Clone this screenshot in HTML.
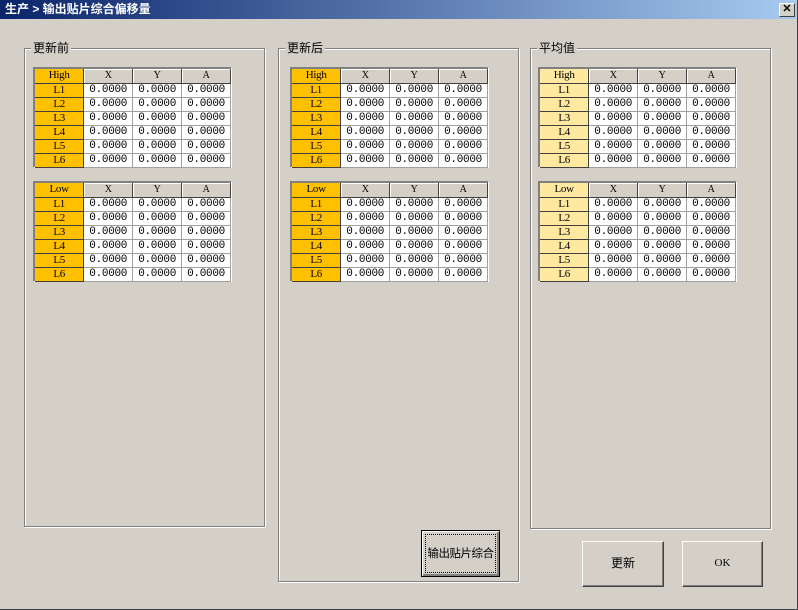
<!DOCTYPE html>
<html><head><meta charset="utf-8"><style>
*{margin:0;padding:0;box-sizing:border-box}
body{width:798px;height:610px;background:#d4d0c8;position:relative;overflow:hidden;font-family:"Liberation Sans","Noto Sans CJK SC",sans-serif;font-size:11px;color:#000}
.win{position:absolute;left:0;top:0;width:798px;height:610px;border-right:1px solid #404040;border-bottom:1px solid #404040}
.title{position:absolute;left:0;top:0;width:797px;height:19px;background:linear-gradient(to right,#0a246a,#a6caf0);color:#fff;font-weight:bold;font-size:12px;line-height:19px;padding-left:5px;font-family:"Liberation Sans","Noto Sans CJK SC",sans-serif}
.close{position:absolute;left:779px;top:3px;width:16px;height:14px;background:#d4d0c8;border:1px solid;border-color:#fff #404040 #404040 #fff;font-size:11px;line-height:11px;text-align:center;color:#000;font-weight:bold}
.grp{position:absolute;border:1px solid #808080;box-shadow:1px 1px 0 #fff,inset 1px 1px 0 #fff}
.lg{position:absolute;background:#d4d0c8;padding:0 2px;top:-8px;left:6px;font-size:12px;line-height:14px}
.tb{position:absolute;width:199px;height:101px;border:1px solid;border-color:#808080 #fff #fff #808080;background:#808080}
table{border-collapse:collapse;position:absolute;left:1px;top:1px;background:#a0a0a0}
td{width:49px;height:14px;padding:0;text-align:center;border-right:1px solid #a0a0a0;border-bottom:1px solid #a0a0a0;font-family:"Liberation Mono",monospace;font-size:11px;line-height:13px;background:#fff;white-space:nowrap;letter-spacing:-0.3px}
td.h{background:#d4d0c8;font-family:"Liberation Serif",serif;font-size:10px;border-color:#404040;box-shadow:inset 1px 1px 0 #fff}
td.r{background:#ffc000;font-family:"Liberation Serif",serif;font-size:11px;border-color:#404040}
.lt td.r{background:#ffe8a0}
.btn{position:absolute;background:#d4d0c8;border:1px solid;border-color:#fff #404040 #404040 #fff;box-shadow:inset -1px -1px 0 #808080;text-align:center;font-size:12px;white-space:nowrap}
</style></head><body><div class="win">
<div class="title">生产 &gt; 输出贴片综合偏移量</div>
<div class="close">✕</div>

<div class="grp" style="left:24px;top:48px;width:241px;height:479px"><div class="lg">更新前</div></div>
<div class="grp" style="left:278px;top:48px;width:241px;height:534px"><div class="lg">更新后</div></div>
<div class="grp" style="left:530px;top:48px;width:241px;height:481px"><div class="lg">平均值</div></div>

<div class="tb" style="left:33px;top:67px"><table><tr><td class="r">High</td><td class="h">X</td><td class="h">Y</td><td class="h">A</td></tr>
<tr><td class="r">L1</td><td>0.0000</td><td>0.0000</td><td>0.0000</td></tr>
<tr><td class="r">L2</td><td>0.0000</td><td>0.0000</td><td>0.0000</td></tr>
<tr><td class="r">L3</td><td>0.0000</td><td>0.0000</td><td>0.0000</td></tr>
<tr><td class="r">L4</td><td>0.0000</td><td>0.0000</td><td>0.0000</td></tr>
<tr><td class="r">L5</td><td>0.0000</td><td>0.0000</td><td>0.0000</td></tr>
<tr><td class="r">L6</td><td>0.0000</td><td>0.0000</td><td>0.0000</td></tr></table></div>
<div class="tb" style="left:33px;top:181px"><table><tr><td class="r">Low</td><td class="h">X</td><td class="h">Y</td><td class="h">A</td></tr>
<tr><td class="r">L1</td><td>0.0000</td><td>0.0000</td><td>0.0000</td></tr>
<tr><td class="r">L2</td><td>0.0000</td><td>0.0000</td><td>0.0000</td></tr>
<tr><td class="r">L3</td><td>0.0000</td><td>0.0000</td><td>0.0000</td></tr>
<tr><td class="r">L4</td><td>0.0000</td><td>0.0000</td><td>0.0000</td></tr>
<tr><td class="r">L5</td><td>0.0000</td><td>0.0000</td><td>0.0000</td></tr>
<tr><td class="r">L6</td><td>0.0000</td><td>0.0000</td><td>0.0000</td></tr></table></div>

<div class="tb" style="left:290px;top:67px"><table><tr><td class="r">High</td><td class="h">X</td><td class="h">Y</td><td class="h">A</td></tr>
<tr><td class="r">L1</td><td>0.0000</td><td>0.0000</td><td>0.0000</td></tr>
<tr><td class="r">L2</td><td>0.0000</td><td>0.0000</td><td>0.0000</td></tr>
<tr><td class="r">L3</td><td>0.0000</td><td>0.0000</td><td>0.0000</td></tr>
<tr><td class="r">L4</td><td>0.0000</td><td>0.0000</td><td>0.0000</td></tr>
<tr><td class="r">L5</td><td>0.0000</td><td>0.0000</td><td>0.0000</td></tr>
<tr><td class="r">L6</td><td>0.0000</td><td>0.0000</td><td>0.0000</td></tr></table></div>
<div class="tb" style="left:290px;top:181px"><table><tr><td class="r">Low</td><td class="h">X</td><td class="h">Y</td><td class="h">A</td></tr>
<tr><td class="r">L1</td><td>0.0000</td><td>0.0000</td><td>0.0000</td></tr>
<tr><td class="r">L2</td><td>0.0000</td><td>0.0000</td><td>0.0000</td></tr>
<tr><td class="r">L3</td><td>0.0000</td><td>0.0000</td><td>0.0000</td></tr>
<tr><td class="r">L4</td><td>0.0000</td><td>0.0000</td><td>0.0000</td></tr>
<tr><td class="r">L5</td><td>0.0000</td><td>0.0000</td><td>0.0000</td></tr>
<tr><td class="r">L6</td><td>0.0000</td><td>0.0000</td><td>0.0000</td></tr></table></div>

<div class="tb lt" style="left:538px;top:67px"><table><tr><td class="r">High</td><td class="h">X</td><td class="h">Y</td><td class="h">A</td></tr>
<tr><td class="r">L1</td><td>0.0000</td><td>0.0000</td><td>0.0000</td></tr>
<tr><td class="r">L2</td><td>0.0000</td><td>0.0000</td><td>0.0000</td></tr>
<tr><td class="r">L3</td><td>0.0000</td><td>0.0000</td><td>0.0000</td></tr>
<tr><td class="r">L4</td><td>0.0000</td><td>0.0000</td><td>0.0000</td></tr>
<tr><td class="r">L5</td><td>0.0000</td><td>0.0000</td><td>0.0000</td></tr>
<tr><td class="r">L6</td><td>0.0000</td><td>0.0000</td><td>0.0000</td></tr></table></div>
<div class="tb lt" style="left:538px;top:181px"><table><tr><td class="r">Low</td><td class="h">X</td><td class="h">Y</td><td class="h">A</td></tr>
<tr><td class="r">L1</td><td>0.0000</td><td>0.0000</td><td>0.0000</td></tr>
<tr><td class="r">L2</td><td>0.0000</td><td>0.0000</td><td>0.0000</td></tr>
<tr><td class="r">L3</td><td>0.0000</td><td>0.0000</td><td>0.0000</td></tr>
<tr><td class="r">L4</td><td>0.0000</td><td>0.0000</td><td>0.0000</td></tr>
<tr><td class="r">L5</td><td>0.0000</td><td>0.0000</td><td>0.0000</td></tr>
<tr><td class="r">L6</td><td>0.0000</td><td>0.0000</td><td>0.0000</td></tr></table></div>

<div class="btn" style="left:421px;top:530px;width:79px;height:47px;border:1px solid #000;box-shadow:inset 1px 1px 0 #fff,inset -2px -2px 0 #808080">
<div style="position:absolute;left:3px;top:3px;right:3px;bottom:3px;border:1px dotted #000;line-height:38px;font-size:11.5px;letter-spacing:-0.5px;overflow:visible">输出贴片综合</div></div>
<div class="btn" style="left:582px;top:541px;width:82px;height:46px;line-height:43px">更新</div>
<div class="btn" style="left:682px;top:541px;width:81px;height:46px;line-height:43px;font-family:'Liberation Serif',serif;font-size:11px">OK</div>
</div></body></html>
